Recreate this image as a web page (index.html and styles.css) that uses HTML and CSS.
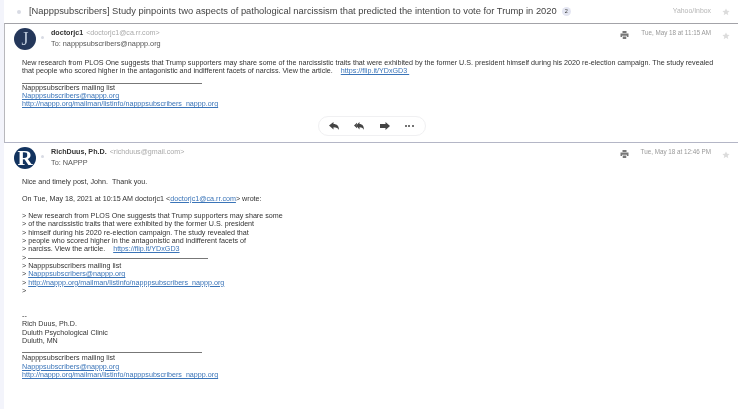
FILE: index.html
```html
<!DOCTYPE html>
<html lang="en">
<head>
    <meta charset="UTF-8">
    <title>Napppsubscribers thread</title>
    <link rel="stylesheet" href="styles.css">
</head>
<body>
    <div class="container">
        <div class="thread-head">
            <span class="dot"></span>
            <h1>[Napppsubscribers] Study pinpoints two aspects of pathological narcissism that predicted the intention to vote for Trump in 2020</h1>
            <span class="count">2</span>
            <span class="folder">Yahoo/Inbox</span>
            <svg class="star" viewBox="0 0 10 10"><path d="M5 .5l1.4 3 3.1.3-2.4 2.1.8 3.1L5 7.3 2.1 9l.8-3.1L.5 3.8l3.1-.3z"/></svg>
        </div>

        <div class="message first">
            <div class="msg-head">
                <div class="avatar avatar-j">J</div>
                <span class="dot dot-msg"></span>
                <div class="who">
                    <div><b>doctorjc1</b> <span class="addr">&lt;doctorjc1@ca.rr.com&gt;</span></div>
                    <div class="to">To: napppsubscribers@nappp.org</div>
                </div>
                <svg class="print" viewBox="0 0 10 10"><path d="M2.5 0h5v2.5h-5zM0 3h10v4.5H8V6H2v1.5H0zM2.8 6.8h4.4V10H2.8z"/></svg>
                <span class="date">Tue, May 18 at 11:15 AM</span>
                <svg class="star" viewBox="0 0 10 10"><path d="M5 .5l1.4 3 3.1.3-2.4 2.1.8 3.1L5 7.3 2.1 9l.8-3.1L.5 3.8l3.1-.3z"/></svg>
            </div>
            <div class="body">
                <p>New research from PLOS One suggests that Trump supporters may share some of the narcissistic traits that were exhibited by the former U.S. president himself during his 2020 re-election campaign. The study revealed that people who scored higher in the antagonistic and indifferent facets of narciss. View the article. &nbsp;&nbsp; <a href="#">https://flip.it/YDxGD3&nbsp;</a></p>
                <hr>
                <p>Napppsubscribers mailing list<br>
                <a href="#">Napppsubscribers@nappp.org</a><br>
                <a href="#">http://nappp.org/mailman/listinfo/napppsubscribers_nappp.org</a></p>
            </div>
            <div class="actions">
                <svg viewBox="0 0 10 8"><path d="M0 3.5L4.5 0v2c3.500 0 5.500 2 5.500 6-1-2-2.500-2.800-5.500-2.800V7.500z"/></svg>
                <svg viewBox="0 0 10 8"><path d="M0 3.5L3 .8v1.400L1.800 3.500 3 4.800v1.400zM5.500 0v2c2.800 0 4.500 2 4.500 6-.8-2-2-2.800-4.500-2.800v2.300L2 3.500z"/></svg>
                <svg viewBox="0 0 10 8"><path d="M0 2h5.500V0L10 4 5.500 8V6H0z"/></svg>
                <span class="more"><i></i><i></i><i></i></span>
            </div>
        </div>

        <div class="message">
            <div class="msg-head">
                <div class="avatar avatar-r">R</div>
                <span class="dot dot-msg"></span>
                <div class="who">
                    <div><b>RichDuus, Ph.D.</b> <span class="addr">&lt;richduus@gmail.com&gt;</span></div>
                    <div class="to">To: NAPPP</div>
                </div>
                <svg class="print" viewBox="0 0 10 10"><path d="M2.5 0h5v2.5h-5zM0 3h10v4.5H8V6H2v1.5H0zM2.8 6.8h4.4V10H2.8z"/></svg>
                <span class="date">Tue, May 18 at 12:46 PM</span>
                <svg class="star" viewBox="0 0 10 10"><path d="M5 .5l1.4 3 3.1.3-2.4 2.1.8 3.1L5 7.3 2.1 9l.8-3.1L.5 3.8l3.1-.3z"/></svg>
            </div>
            <div class="body body-reply">
                <p>Nice and timely post, John. &nbsp;Thank you.</p>
                <p>On Tue, May 18, 2021 at 10:15 AM doctorjc1 &lt;<a href="#">doctorjc1@ca.rr.com</a>&gt; wrote:</p>
                <p>&gt; New research from PLOS One suggests that Trump supporters may share some<br>
                &gt; of the narcissistic traits that were exhibited by the former U.S. president<br>
                &gt; himself during his 2020 re-election campaign. The study revealed that<br>
                &gt; people who scored higher in the antagonistic and indifferent facets of<br>
                &gt; narciss. View the article. &nbsp;&nbsp; <a href="#">https://flip.it/YDxGD3</a><br>
                &gt; <span class="rule-inline"></span><br>
                &gt; Napppsubscribers mailing list<br>
                &gt; <a href="#">Napppsubscribers@nappp.org</a><br>
                &gt; <a href="#">http://nappp.org/mailman/listinfo/napppsubscribers_nappp.org</a><br>
                &gt;</p>
                <p class="sig">--<br>
                Rich Duus, Ph.D.<br>
                Duluth Psychological Clinic<br>
                Duluth, MN</p>
                <hr>
                <p>Napppsubscribers mailing list<br>
                <a href="#">Napppsubscribers@nappp.org</a><br>
                <a href="#">http://nappp.org/mailman/listinfo/napppsubscribers_nappp.org</a></p>
            </div>
        </div>
    </div>
</body>
</html>
```

FILE: styles.css
```css
html, body {
    margin: 0;
    height: 409px;
    overflow: hidden;
}
body {
    font-family: "Liberation Sans", Arial, sans-serif;
    font-size: 7.16px;
    line-height: 8.35px;
    color: #333;
    background-color: #f3f4fb;
    padding-left: 4px;
    box-sizing: border-box;
}
.container {
    background-color: white;
    height: 409px;
    filter: blur(0.4px);
}
.thread-head {
    display: flex;
    align-items: center;
    height: 23px;
    padding-left: 13px;
    padding-right: 8px;
}
h1 {
    margin: 0 0 0 8px;
    font-size: 9.35px;
    font-weight: normal;
    color: #444;
    white-space: nowrap;
}
.count {
    margin-left: 5px;
    width: 9px;
    height: 9px;
    border-radius: 50%;
    background-color: #e4e6f2;
    font-size: 5.5px;
    line-height: 9px;
    text-align: center;
}
.folder {
    margin-left: auto;
    font-size: 6.9px;
    color: #b5b5b5;
}
.dot {
    width: 4px;
    height: 4px;
    border-radius: 50%;
    background-color: #d8dbe4;
}
.star {
    width: 8px;
    height: 8px;
    fill: #dcdcdc;
    margin-left: 11px;
}
.message {
    padding: 0 8px 0 10px;
}
.first {
    height: 118px;
    border-top: 1px solid #a3a3a8;
    border-left: 1px solid #b8b8bc;
    border-bottom: 1px solid #b4b6c6;
    padding-left: 9px;
}
.msg-head {
    display: flex;
    align-items: flex-start;
    padding-top: 4px;
}
.avatar {
    width: 22px;
    height: 22px;
    border-radius: 50%;
    color: white;
    font-family: "Liberation Serif", serif;
    font-size: 18px;
    line-height: 22px;
    text-align: center;
    flex-shrink: 0;
}
.avatar-j {
    background-color: #24375a;
    color: #b9c6d8;
}
.avatar-r {
    background-color: #12335f;
    font-weight: bold;
    font-size: 21px;
}
.dot-msg {
    margin: 8px 0 0 5px;
    width: 3px;
    height: 3px;
}
.who {
    margin-left: 7px;
    margin-top: 1px;
    line-height: 9.5px;
    flex-grow: 1;
}
.who b {
    color: #333;
}
.addr {
    color: #aaa;
    font-size: 7.1px;
    margin-left: 1px;
}
.to {
    color: #555;
    font-size: 7.3px;
}
.print {
    width: 9px;
    height: 8px;
    fill: #777;
    margin-top: 3px;
}
.date {
    margin-left: 12px;
    margin-top: 1px;
    font-size: 6.3px;
    color: #999;
}
.msg-head .star {
    margin-top: 4px;
}
.body {
    margin: 9px 0 0 8px;
    width: 692px;
}
.body p {
    margin: 0;
}
hr {
    width: 180px;
    height: 1px;
    margin: 7px 0 0 0;
    border: none;
    background-color: #777;
}
a {
    color: #3a74b8;
}
.actions {
    display: flex;
    align-items: center;
    justify-content: space-between;
    width: 108px;
    height: 20px;
    margin: 7px 0 0 304px;
    padding: 0 11px 0 10px;
    border: 1px solid #f0f0f2;
    border-radius: 10px;
    box-sizing: border-box;
}
.actions svg {
    width: 10px;
    height: 8px;
    fill: #444;
}
.more {
    display: flex;
    gap: 1.5px;
}
.more i {
    width: 2px;
    height: 2px;
    border-radius: 50%;
    background-color: #444;
}
.body-reply {
    margin-top: 9px;
}
.body-reply p {
    margin-bottom: 8.6px;
}
.rule-inline {
    display: inline-block;
    width: 180px;
    height: 1px;
    background-color: #777;
    vertical-align: 1px;
}
.body-reply .sig {
    margin-top: 16.65px;
    margin-bottom: 7px;
}
.body-reply hr {
    margin: 0 0 1px 0;
}
```
